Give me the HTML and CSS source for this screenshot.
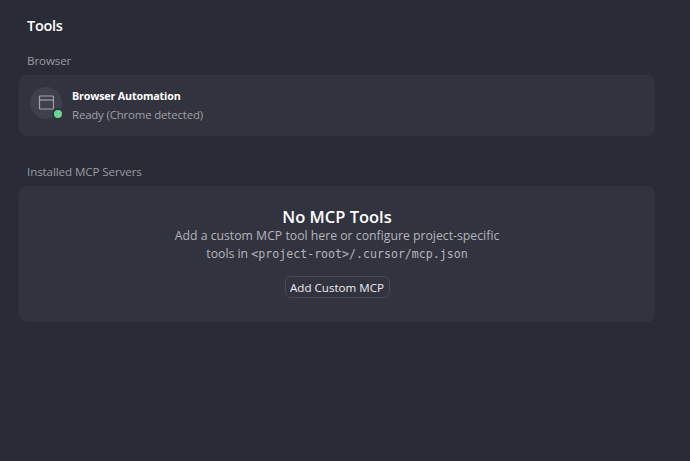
FILE: index.html
```html
<!DOCTYPE html>
<html lang="en">
<head>
    <meta charset="UTF-8">
    <meta name="viewport" content="width=device-width, initial-scale=1.0">
    <title>Tools</title>
    <link rel="stylesheet" href="styles.css">
</head>
<body>
    <h1 class="page-title">Tools</h1>

    <section class="group group-browser">
        <h2 class="group-label">Browser</h2>
        <div class="card browser-card">
            <div class="tool-icon">
                <svg width="16" height="16" viewBox="0 0 16 16" fill="none" stroke="#a3a4a9" stroke-width="1.2">
                    <rect x="1.5" y="1" width="14" height="13" rx="0.8"/>
                    <path d="M1.5 5h14"/>
                </svg>
                <span class="status-dot"></span>
            </div>
            <div class="tool-info">
                <div class="tool-name">Browser Automation</div>
                <div class="tool-status">Ready (Chrome detected)</div>
            </div>
        </div>
    </section>

    <section class="group group-mcp">
        <h2 class="group-label">Installed MCP Servers</h2>
        <div class="card empty-card">
            <h3 class="empty-title">No MCP Tools</h3>
            <p class="empty-text">Add a custom MCP tool here or configure project-specific<br>tools in <code>&lt;project-root&gt;/.cursor/mcp.json</code></p>
            <button type="button" class="add-btn">Add Custom MCP</button>
        </div>
    </section>
</body>
</html>
```

FILE: styles.css
```css
body {
    margin: 0;
    height: 461px;
    overflow: hidden;
    padding: 17px 35px 0 19px;
    box-sizing: border-box;
    background-color: #292b36;
    color: #fff;
    font-family: "Open Sans", "Noto Sans", sans-serif;
}
.page-title {
    margin: 0 0 0 8px;
    font-size: 14.5px;
    line-height: 18px;
    font-weight: 600;
    letter-spacing: -0.3px;
}
.group-browser {
    margin-top: 18px;
}
.group-mcp {
    margin-top: 28px;
}
.group-label {
    margin: 0 0 6px 8px;
    font-size: 11.6px;
    line-height: 16px;
    font-weight: 400;
    color: #9a9ba1;
    letter-spacing: -0.1px;
}
.card {
    background-color: #31333f;
    border-radius: 8px;
}
.browser-card {
    height: 61px;
    box-sizing: border-box;
    display: flex;
    align-items: flex-start;
    padding: 12px 0 0 11px;
}
.tool-icon {
    position: relative;
    width: 32px;
    height: 32px;
    border-radius: 50%;
    background-color: #3e404b;
    display: flex;
    align-items: center;
    justify-content: center;
}
.status-dot {
    position: absolute;
    right: -2px;
    bottom: -1px;
    width: 8px;
    height: 8px;
    border-radius: 50%;
    background-color: #6fd391;
    border: 2px solid #31333f;
}
.tool-info {
    margin-left: 10px;
}
.tool-name {
    font-size: 10.7px;
    line-height: 19px;
    font-weight: 700;
    letter-spacing: -0.15px;
}
.tool-status {
    font-size: 11.4px;
    line-height: 18px;
    color: #a0a1a7;
    letter-spacing: -0.15px;
}
.empty-card {
    height: 136px;
    box-sizing: border-box;
    padding-top: 20px;
    text-align: center;
}
.empty-title {
    margin: 0;
    font-size: 16.5px;
    line-height: 21px;
    font-weight: 600;
}
.empty-text {
    margin: 0;
    font-size: 12.25px;
    line-height: 18px;
    color: #b4b5ba;
}
.empty-text code {
    font-family: "DejaVu Sans Mono", monospace;
    font-size: 11.6px;
}
.add-btn {
    display: block;
    margin: 13px auto 0;
    width: 105px;
    height: 22px;
    padding: 0;
    background: transparent;
    border: 1px solid #474953;
    border-radius: 6px;
    color: #eeeef0;
    font-family: inherit;
    font-size: 11.6px;
}
```
